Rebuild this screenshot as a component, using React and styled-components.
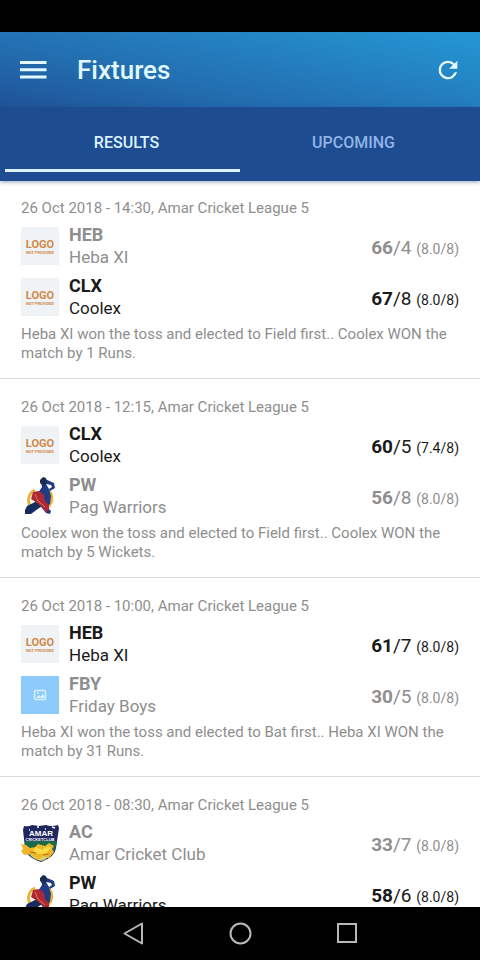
import React, { useState } from "react"
import styled, { createGlobalStyle } from "styled-components"

const GlobalStyle = createGlobalStyle`
    * {
        box-sizing: border-box;
    }
    body {
        margin: 0;
        background: #fff;
        font-family: Roboto, "Noto Sans", sans-serif;
    }
    button {
        border: 0;
        padding: 0;
        background: none;
        font-family: inherit;
        cursor: pointer;
    }
    svg {
        display: block;
    }
`
const Screen = styled.div`
    display: flex;
    flex-direction: column;
    height: 100vh;
`
const StatusBar = styled.div`
    flex: none;
    height: 32px;
    background: #000;
`
const AppBar = styled.header`
    flex: none;
    display: flex;
    align-items: center;
    gap: 28px;
    height: 75px;
    padding: 0 18px 0 17px;
    background: linear-gradient(192deg, #2398d3 0%, #247fc0 38%, #226cae 68%, #1f5298 100%);
`
const Title = styled.h1`
    flex: 1;
    margin: 0;
    font-size: 26px;
    font-weight: 500;
    line-height: 32px;
    color: #e2f8ff;
`
const IconButton = styled.button`
    display: flex;
    color: #e2f8ff;
`
const Tabs = styled.nav`
    flex: none;
    display: grid;
    grid-template-columns: 1fr 1fr;
    height: 73px;
    padding: 0 13px;
    background: #1e4c91;
    box-shadow: 0 1px 0 #1e4c91, 0 2px 4px rgba(30, 76, 110, 0.5);
    z-index: 1;
`
const Tab = styled.button`
    position: relative;
    padding-bottom: 2px;
    font-size: 16px;
    font-weight: 500;
    color: ${({ $active }) => ($active ? "#dcf3ff" : "#8fb4e6")};

    &::after {
        content: "";
        position: absolute;
        left: -8px;
        right: 0;
        bottom: 8px;
        height: 3px;
        background: ${({ $active }) => ($active ? "#dcf0fb" : "transparent")};
    }
`
const MatchList = styled.main`
    flex: 1;
    min-height: 0;
    overflow: hidden;
`
const Match = styled.article`
    display: flex;
    flex-direction: column;
    padding: 18px 21px 15px;
    border-bottom: 1px solid #dcdcdc;
`
const MatchDate = styled.div`
    margin-bottom: 6px;
    font-size: 15px;
    line-height: 20px;
    color: #8e8e8e;
`
const Teams = styled.div`
    display: flex;
    flex-direction: column;
    gap: 7px;
`
const TeamRow = styled.div`
    display: flex;
    align-items: center;
    gap: 10px;
    height: 44px;
    color: ${({ $winner }) => ($winner ? "#1a1a1a" : "#8e8e8e")};
`
const TeamText = styled.div`
    flex: 1;
    font-size: 17px;
    line-height: 22px;
`
const TeamCode = styled.div`
    font-size: 18px;
    font-weight: 700;
`
const Score = styled.div`
    padding-top: 5px;
    font-size: 19px;
    line-height: 22px;
`
const Overs = styled.span`
    font-size: 14px;
`
const Summary = styled.p`
    margin: 6px 0 0;
    font-size: 15px;
    line-height: 19px;
    color: #8e8e8e;
`
const NavBar = styled.footer`
    flex: none;
    display: flex;
    justify-content: center;
    gap: 80px;
    height: 53px;
    background: #000;
`

const MenuIcon = () => (
    <svg width="32" height="32" viewBox="0 0 32 32">
        <path d="M3 8.500h26.500M3 15.800h26.500M3 23h26.500" stroke="currentColor" strokeWidth="3" />
    </svg>
)

const RefreshIcon = () => (
    <svg width="28" height="28" viewBox="0 0 24 24" fill="currentColor">
        <path d="M17.650 6.350A7.960 7.960 0 0 0 12 4a8 8 0 1 0 7.730 10h-2.080A6 6 0 1 1 12 6c1.660 0 3.140.690 4.220 1.780L13 11h7V4z" />
    </svg>
)

const PlaceholderLogo = () => (
    <svg width="38" height="38" viewBox="0 0 38 38">
        <rect width="38" height="38" fill="#f0f3f5" />
        <g fill="#cf8a4a" textAnchor="middle" fontWeight="700" fontFamily="Roboto, sans-serif">
            <text x="19" y="21" fontSize="11">
                LOGO
            </text>
            <text x="19" y="27" fontSize="4">
                NOT PROVIDED
            </text>
        </g>
    </svg>
)

const WarriorsLogo = () => (
    <svg width="38" height="38" viewBox="0 0 38 38">
        <path d="M14 13A11 11 0 0 0 11 31" fill="none" stroke="#e8b53a" strokeWidth="3" />
        <path d="M28 14A11 11 0 0 1 25 31" fill="none" stroke="#e8b53a" strokeWidth="3" />
        <path d="M20 5l4-3 9 4 1 5-5 3-1-2 3-2-1-2-5-1 3 5 2 7-1 8-3 3 4 4-1 3-4-1-8-10-1-8 3-5 2-3z" fill="#203d83" />
        <path d="M16 24l-10 5-2 4v4h6l4-3 7-5z" fill="#172d60" />
        <path d="M19 3l3-3 3 1 1 5-3 3-4-3z" fill="#1b2c50" />
        <path d="M12 15l6-1 5 4 1 6 4 4v5l-3 2-4-5-5-4-6-4z" fill="#ad2937" />
        <path d="M14 17l3 7 7 6" fill="none" stroke="#e27b35" strokeWidth="1" />
    </svg>
)

const PhotoLogo = () => (
    <svg width="38" height="38" viewBox="0 0 38 38">
        <rect width="38" height="38" fill="#8ecbfa" />
        <rect x="13.500" y="14.500" width="11" height="9" rx="1" fill="none" stroke="#d5efff" strokeWidth="1.500" />
        <path d="M15 22l3-3 2 1.500 2-3 2 4.500z" fill="#d5efff" />
        <circle cx="17" cy="17" r="1" fill="#d5efff" />
    </svg>
)

const AmarLogo = () => (
    <svg width="38" height="38" viewBox="0 0 38 38">
        <path d="M3 2q5 1 8-1l7 1 7-1q5 2 12 0l1 3-3 20q-1 9-15 14Q5 33 4 24L2 6z" fill="#20265f" />
        <path d="M4 17h32l-2 9q-2 6-14 11Q6 33 4 25z" fill="#176b4c" />
        <path d="M8 29l9 3 13-4q-2 7-10 9-9-2-12-8z" fill="#d7d46a" />
        <path d="M0 20l5 1 4 3 5-1 3-3 7 2 4-3 5 3-2 3 2 3-5 6-6-2-5 4-7-6-7 1-3-4 2-2z" fill="#efb62c" />
        <path d="M15 23l6 3 6-4 3 2-5 5-7 1-6-3z" fill="#f7dc43" />
        <path d="M9 28l6 1M22 31l6-1" stroke="#b56e1c" />
        <path d="M16 3h2M31 3l3 1M8 6h1M24 5h1" stroke="#fff" strokeWidth="1.500" />
        <g fill="#fff" textAnchor="middle" fontWeight="700" fontFamily="Liberation Sans, sans-serif">
            <text x="20" y="12" fontSize="8">
                AMAR
            </text>
            <text x="19" y="17" fontSize="4">
                CRICKETCLUB
            </text>
        </g>
    </svg>
)

const teams = {
    HEB: { name: "Heba XI", Logo: PlaceholderLogo },
    CLX: { name: "Coolex", Logo: PlaceholderLogo },
    PW: { name: "Pag Warriors", Logo: WarriorsLogo },
    FBY: { name: "Friday Boys", Logo: PhotoLogo },
    AC: { name: "Amar Cricket Club", Logo: AmarLogo },
}

const matches = [
    {
        date: "26 Oct 2018 - 14:30",
        innings: [
            { code: "HEB", runs: 66, wickets: 4, overs: "8.0/8" },
            { code: "CLX", runs: 67, wickets: 8, overs: "8.0/8", winner: true },
        ],
        summary: "Heba XI won the toss and elected to Field first.. Coolex WON the match by 1 Runs.",
    },
    {
        date: "26 Oct 2018 - 12:15",
        innings: [
            { code: "CLX", runs: 60, wickets: 5, overs: "7.4/8", winner: true },
            { code: "PW", runs: 56, wickets: 8, overs: "8.0/8" },
        ],
        summary: "Coolex won the toss and elected to Field first.. Coolex WON the match by 5 Wickets.",
    },
    {
        date: "26 Oct 2018 - 10:00",
        innings: [
            { code: "HEB", runs: 61, wickets: 7, overs: "8.0/8", winner: true },
            { code: "FBY", runs: 30, wickets: 5, overs: "8.0/8" },
        ],
        summary: "Heba XI won the toss and elected to Bat first.. Heba XI WON the match by 31 Runs.",
    },
    {
        date: "26 Oct 2018 - 08:30",
        innings: [
            { code: "AC", runs: 33, wickets: 7, overs: "8.0/8" },
            { code: "PW", runs: 58, wickets: 6, overs: "8.0/8", winner: true },
        ],
    },
]

const Team = ({ code, runs, wickets, overs, winner }) => {
    const { name, Logo } = teams[code]
    return (
        <TeamRow $winner={winner}>
            <Logo />
            <TeamText>
                <TeamCode>{code}</TeamCode>
                <div>{name}</div>
            </TeamText>
            <Score>
                <b>{runs}</b>/{wickets} <Overs>({overs})</Overs>
            </Score>
        </TeamRow>
    )
}

const App = () => {
    const [tab, setTab] = useState("RESULTS")

    return (
        <Screen>
            <GlobalStyle />
            <StatusBar />
            <AppBar>
                <IconButton aria-label="Menu">
                    <MenuIcon />
                </IconButton>
                <Title>Fixtures</Title>
                <IconButton aria-label="Refresh">
                    <RefreshIcon />
                </IconButton>
            </AppBar>
            <Tabs>
                {["RESULTS", "UPCOMING"].map((name) => (
                    <Tab key={name} $active={tab === name} onClick={() => setTab(name)}>
                        {name}
                    </Tab>
                ))}
            </Tabs>
            <MatchList>
                {matches.map((match) => (
                    <Match key={match.date}>
                        <MatchDate>{match.date}, Amar Cricket League 5</MatchDate>
                        <Teams>
                            {match.innings.map((inning) => (
                                <Team key={inning.code} {...inning} />
                            ))}
                        </Teams>
                        {match.summary && <Summary>{match.summary}</Summary>}
                    </Match>
                ))}
            </MatchList>
            <NavBar>
                <IconButton aria-label="Back">
                    <svg width="27" height="53" viewBox="0 0 27 53" fill="none" stroke="#b8b8b8" strokeWidth="2">
                        <path d="M22 16.500v20L4.500 26.500z" strokeLinejoin="round" />
                    </svg>
                </IconButton>
                <IconButton aria-label="Home">
                    <svg width="27" height="53" viewBox="0 0 27 53" fill="none" stroke="#b8b8b8" strokeWidth="2">
                        <circle cx="13.500" cy="26.500" r="10" />
                    </svg>
                </IconButton>
                <IconButton aria-label="Recent apps">
                    <svg width="27" height="53" viewBox="0 0 27 53" fill="none" stroke="#b8b8b8" strokeWidth="2">
                        <rect x="4" y="17" width="18" height="18" />
                    </svg>
                </IconButton>
            </NavBar>
        </Screen>
    )
}
export default App
